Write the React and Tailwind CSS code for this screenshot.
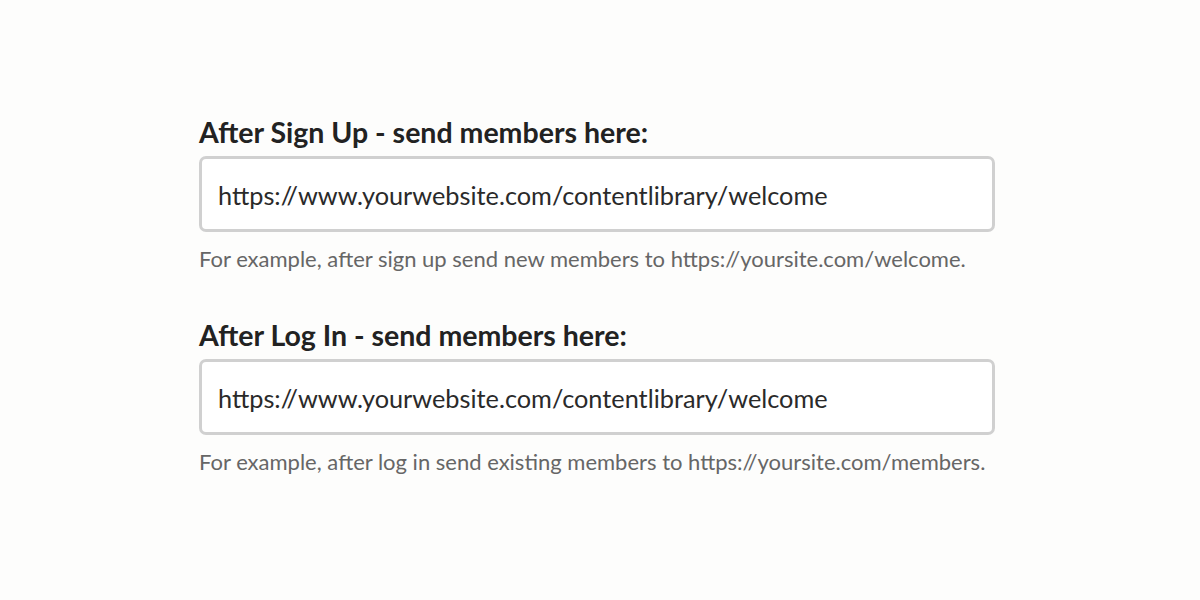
import React from "react";

const fields = [
  {
    label: "After Sign Up - send members here:",
    value: "https://www.yourwebsite.com/contentlibrary/welcome",
    hint: "For example, after sign up send new members to https://yoursite.com/welcome.",
  },
  {
    label: "After Log In - send members here:",
    value: "https://www.yourwebsite.com/contentlibrary/welcome",
    hint: "For example, after log in send existing members to https://yoursite.com/members.",
  },
];

const App = () => {
  return (
    <div className="min-h-[600px] w-[1200px] bg-[#fdfdfc] font-['Lato',sans-serif]">
      <div className="pl-[199px] pt-[112px] flex flex-col gap-[41px]">
        {fields.map((field, index) => (
          <div key={index} className="flex flex-col">
            <label className="text-[28.5px] leading-[40px] font-bold text-[#222]">
              {field.label}
            </label>
            <div className="mt-[4px] w-[796px] h-[76px] border-[3px] border-[#d0d0d0] rounded-[7px] bg-white flex items-center px-[16px] pt-[3px]">
              <span className="text-[25.3px] text-[#2a2a2a]">{field.value}</span>
            </div>
            <p className="mt-[12px] text-[22px] leading-[30px] text-[#666]">
              {field.hint}
            </p>
          </div>
        ))}
      </div>
    </div>
  );
};

export default App;
